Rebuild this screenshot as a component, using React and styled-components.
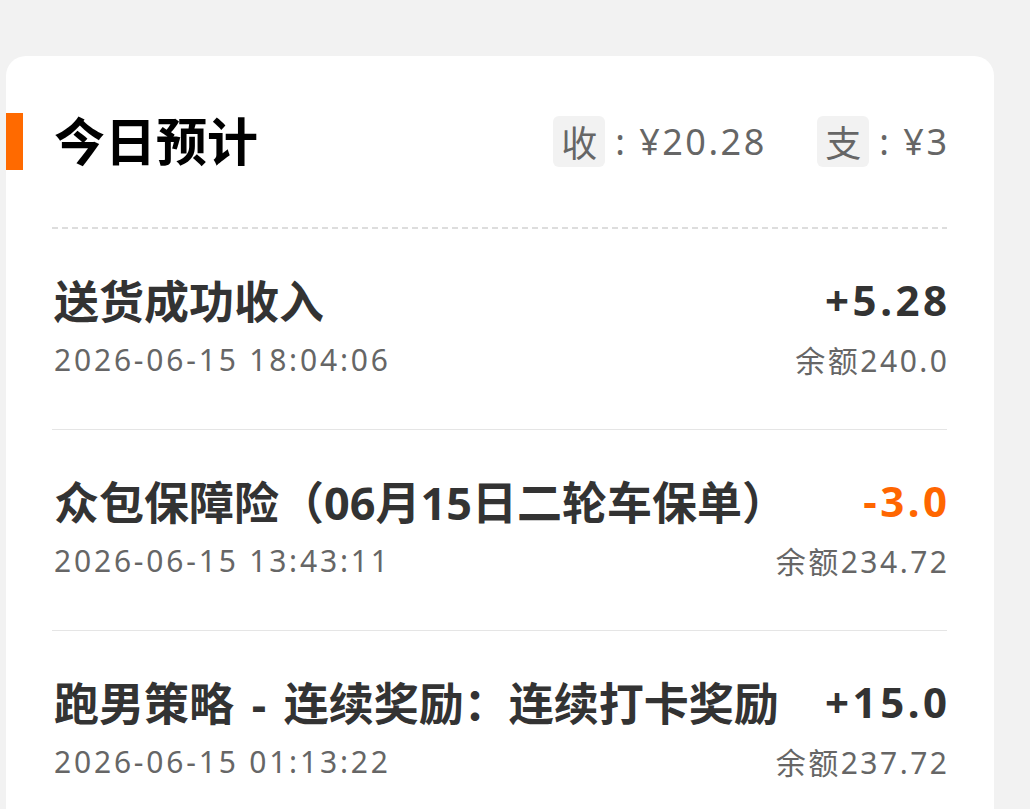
import React from "react";
import styled, { createGlobalStyle } from "styled-components";

const records = [
    { title: "送货成功收入", time: "2026-06-15 18:04:06", amount: "+5.28", balance: "240.0", out: false },
    { title: "众包保障险（06月15日二轮车保单）", time: "2026-06-15 13:43:11", amount: "-3.0", balance: "234.72", out: true },
    { title: "跑男策略 - 连续奖励：连续打卡奖励", time: "2026-06-15 01:13:22", amount: "+15.0", balance: "237.72", out: false },
];

const App = () => {
    return (
        <>
            <GlobalStyle />
            <Page>
                <Card>
                    <Header>
                        <Accent />
                        <Title>今日预计</Title>
                        <Summary>
                            <SumItem>
                                <Badge>收</Badge>
                                <SumValue>: ¥20.28</SumValue>
                            </SumItem>
                            <SumItem>
                                <Badge>支</Badge>
                                <SumValue>: ¥3</SumValue>
                            </SumItem>
                        </Summary>
                    </Header>
                    <List>
                        {records.map((r) => (
                            <Row key={r.time}>
                                <RowTitle>{r.title}</RowTitle>
                                <Amount $out={r.out}>{r.amount}</Amount>
                                <Time>{r.time}</Time>
                                <Balance>余额{r.balance}</Balance>
                            </Row>
                        ))}
                    </List>
                </Card>
            </Page>
        </>
    );
};

export default App;

const GlobalStyle = createGlobalStyle`
    html, body {
        margin:0;
        padding:0;
        background:#f2f2f2;
    }
    body {
        font-family:"Noto Sans", "Noto Sans CJK SC", sans-serif;
        overflow:hidden;
    }
`;

const Page = styled.div`
    height:809px;
    padding:56px 36px 0 6px;
    box-sizing:border-box;
`;

const Card = styled.div`
    background:#fff;
    border-radius:20px 20px 0 0;
    height:100%;
    padding-top:57px;
    box-sizing:border-box;
`;

const Header = styled.div`
    display:flex;
    align-items:center;
    height:57px;
    padding-right:47px;
`;

const Accent = styled.div`
    width:17px;
    height:57px;
    background:#ff6a00;
`;

const Title = styled.h1`
    margin:0 0 0 31px;
    font-size:51px;
    font-weight:700;
    color:#000;
    line-height:1;
`;

const Summary = styled.div`
    margin-left:auto;
    display:flex;
    align-items:center;
    gap:53px;
`;

const SumItem = styled.div`
    display:flex;
    align-items:center;
`;

const Badge = styled.span`
    display:flex;
    align-items:center;
    justify-content:center;
    width:52px;
    height:51px;
    border-radius:6px;
    background:#f2f2f2;
    color:#666;
    font-size:36px;
`;

const SumValue = styled.span`
    margin-left:10px;
    margin-right:-2.5px;
    font-size:36px;
    color:#666;
    letter-spacing:2.5px;
`;

const List = styled.div`
    margin:57px 47px 0 46px;
    padding-top:2px;
    background:repeating-linear-gradient(90deg, #ddd 0 6px, transparent 6px 10px) top left / 100% 2px no-repeat;
`;

const Row = styled.div`
    display:grid;
    grid-template-columns:minmax(0, 1fr) auto;
    grid-template-rows:60px 60px;
    column-gap:20px;
    align-items:center;
    padding:40px 0 40px 2px;
    border-bottom:1px solid #e5e5e5;
`;

const RowTitle = styled.div`
    font-size:45px;
    font-weight:700;
    color:#333;
    white-space:nowrap;
    word-spacing:6px;
`;

const Amount = styled.div`
    font-size:42px;
    font-weight:700;
    color:${(p) => (p.$out ? "#ff6600" : "#333")};
    text-align:right;
    white-space:nowrap;
    letter-spacing:3.5px;
    margin-right:-3.5px;
`;

const Time = styled.div`
    font-size:30px;
    color:#666;
    letter-spacing:2.8px;
    white-space:nowrap;
`;

const Balance = styled.div`
    font-size:30px;
    color:#666;
    text-align:right;
    white-space:nowrap;
    letter-spacing:2.5px;
    margin-right:-2.5px;
`;
